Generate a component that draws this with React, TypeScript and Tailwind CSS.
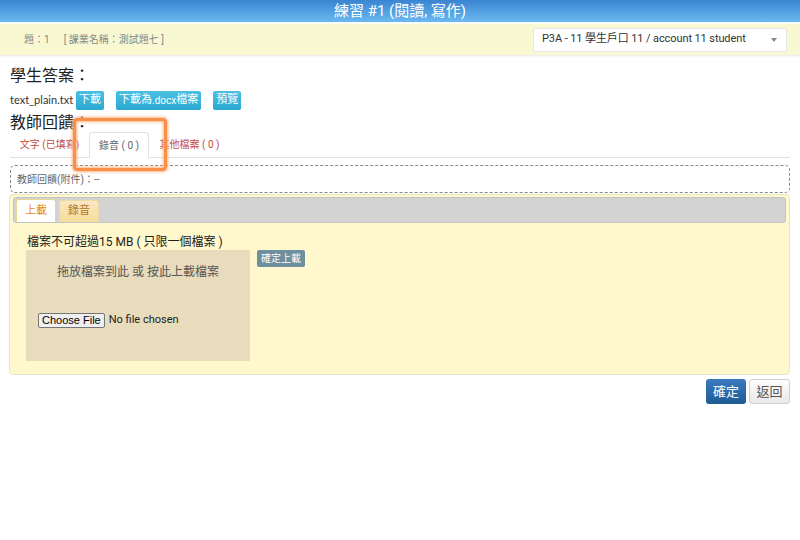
import React from "react";

const F = { fontFamily: 'Roboto, "Noto Sans CJK TC", sans-serif' };

export default function App() {
  return (
    <div className="relative w-[800px] h-[540px] bg-white text-[#333] overflow-hidden" style={F}>
      {/* header */}
      <div className="h-[22px] bg-gradient-to-b from-[#3a84d2] to-[#6bb9f0] flex items-center justify-center">
        <span className="text-white text-[15px] leading-[22px]">練習 #1 (閱讀, 寫作)</span>
      </div>
      <div className="mt-[2px] h-[31px] bg-[#f8f8d3] flex items-center justify-between pl-[24px] pr-[13px] shadow-[0_1px_2px_#e6e6e6]">
        <div className="text-[10px] text-[#888] flex gap-[14px]">
          <span>題：1</span>
          <span>[ 課業名稱：測試題七 ]</span>
        </div>
        <div className="w-[254px] h-[24px] bg-white rounded-[3px] border border-[#e8e8e8] flex items-center justify-between pl-[8px] pr-[9px]">
          <span className="text-[11px] text-[#333] whitespace-nowrap tracking-[-0.1px]">P3A - 11 學生戶口 11 / account 11 student</span>
          <span className="w-0 h-0 border-l-[3px] border-r-[3px] border-t-[4px] border-l-transparent border-r-transparent border-t-[#888]"></span>
        </div>
      </div>

      <div className="px-[10px]">
        <div className="mt-[11px] text-[16px] leading-[20px] text-[#222]">學生答案：</div>
        <div className="mt-[4px] h-[20px] flex items-center text-[11px]">
          <span className="text-[#333] mr-[3px]" style={{ fontFamily: 'Lato, sans-serif' }}>text_plain.txt</span>
          <span className="h-[19px] px-[3px] flex items-center rounded-[2px] bg-gradient-to-b from-[#4cc0e3] to-[#28a8d0] text-white text-[11px] mr-[12px]">下載</span>
          <span className="h-[19px] px-[3px] flex items-center rounded-[2px] bg-gradient-to-b from-[#4cc0e3] to-[#28a8d0] text-white text-[11px] mr-[12px]">下載為<span className="text-[10px]">.docx</span>檔案</span>
          <span className="h-[19px] px-[3px] flex items-center rounded-[2px] bg-gradient-to-b from-[#4cc0e3] to-[#28a8d0] text-white text-[11px]">預覽</span>
        </div>
        <div className="mt-[4px] text-[16px] leading-[18px] text-[#222]">教師回饋：</div>
        <div className="h-[26px] flex items-stretch border-b border-[#e2e2e2] text-[10px]">
          <div className="w-[79px] flex items-center justify-center text-[#c24a48]">文字 (已填寫)</div>
          <div className="w-[60px] -mb-px flex items-center justify-center bg-white border border-b-white border-[#e2e2e2] rounded-t-[3px] text-[#666]">錄音 ( 0 )</div>
          <div className="w-[81px] flex items-center justify-center text-[#c24a48]">其他檔案 ( 0 )</div>
        </div>
        <div className="mt-[7px] h-[28px] border border-dashed border-[#888] rounded-[5px] flex items-center pl-[6px] text-[10px] text-[#666]">
          教師回饋(附件)：--
        </div>
      </div>

      {/* yellow panel */}
      <div className="ml-[9px] mr-[10px] mt-[1px] h-[181px] bg-[#fff8cc] border border-[#ebe6c4] rounded-[4px] px-[3px] pt-[2px]">
        <div className="h-[26px] bg-[#d3d3d3] border border-[#c4c4c4] rounded-[3px] flex items-end pl-[2px] gap-[3px]">
          <div className="w-[40px] h-[23px] bg-white border border-[#e8d890] border-b-0 rounded-t-[3px] flex items-center justify-center text-[11px] text-[#e58a1c]">上載</div>
          <div className="w-[40px] h-[22px] bg-gradient-to-b from-[#fbe7c4] to-[#f7dc98] border border-[#efd9a4] border-b-0 rounded-t-[3px] flex items-center justify-center text-[11px] text-[#b07a2a]">錄音</div>
        </div>
        <div className="pl-[14px] mt-[12px] text-[12px] leading-[14px] text-[#222]">檔案不可超過15 MB ( 只限一個檔案 )</div>
        <div className="pl-[13px] mt-[1px] flex items-start gap-[7px]">
          <div className="w-[224px] h-[111px] bg-[#e8dcbc] flex flex-col items-center">
            <div className="mt-[13px] text-[12px] text-[#555]">拖放檔案到此 或 按此上載檔案</div>
            <div className="mt-[31px] self-start ml-[12px] flex items-center gap-[4px] text-[11px]">
              <span className="px-[3px] h-[15px] leading-[13px] border border-[#767676] bg-[#efefef] rounded-[2px] text-[#000]" style={{ fontFamily: '"Liberation Sans", Arial, sans-serif' }}>Choose File</span>
              <span className="text-[#222]">No file chosen</span>
            </div>
          </div>
          <div className="h-[17px] px-[4px] bg-[#6d8fa0] rounded-[2px] text-white text-[10px] leading-[17px]">確定上載</div>
        </div>
      </div>

      <div className="mt-[4px] pr-[10px] flex justify-end gap-[3px]">
        <span className="w-[40px] h-[25px] rounded-[3px] bg-gradient-to-b from-[#3a7bbf] to-[#1d5b94] text-white text-[13px] flex items-center justify-center">確定</span>
        <span className="w-[41px] h-[25px] rounded-[3px] bg-gradient-to-b from-[#fdfdfd] to-[#e8e8e8] border border-[#d0d0d0] text-[#555] text-[13px] flex items-center justify-center">返回</span>
      </div>

      {/* annotation highlight */}
      <div className="absolute left-[73px] top-[118px] w-[94px] h-[53px] border-[3px] border-[#f8904a] rounded-[4px] shadow-[0_0_3px_1px_#fbb584,inset_0_0_3px_1px_#fbb584]"></div>
    </div>
  );
}
